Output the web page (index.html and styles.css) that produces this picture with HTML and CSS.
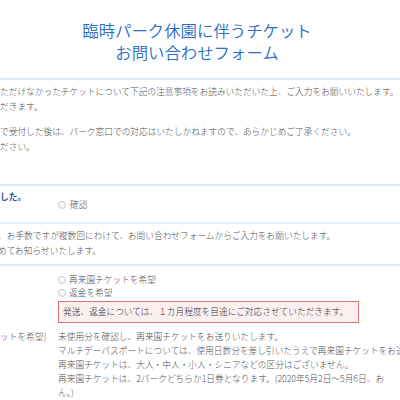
FILE: index.html
```html
<!DOCTYPE html>
<html lang="ja">
<head>
<meta charset="utf-8">
<title>臨時パーク休園に伴うチケットお問い合わせフォーム</title>
<link rel="stylesheet" href="styles.css">
</head>
<body>
<div class="page">
  <header class="head">
    <h1 class="title">臨時パーク休園に伴うチケット<br>お問い合わせフォーム</h1>
  </header>

  <section class="intro">
    <p>ただけなかったチケットについて下記の注意事項をお読みいただいた上、ご入力をお願いいたします。<br>だきます。</p>
    <p>で受付した後は、パーク窓口での対応はいたしかねますので、あらかじめご了承ください。<br>ださい。</p>
  </section>

  <div class="row row-confirm">
    <div class="label label-strong">した。</div>
    <div class="value value-confirm">
      <label class="radio"><span class="dot"></span>確認</label>
    </div>
  </div>

  <section class="note">
    <p class="cut">、お手数ですが複数回にわけて、お問い合わせフォームからご入力をお願いたします。<br>めてお知らせいたします。</p>
  </section>

  <div class="row row-choice">
    <div class="label"></div>
    <div class="value">
      <label class="radio"><span class="dot"></span>再来園チケットを希望</label>
      <label class="radio"><span class="dot"></span>返金を希望</label>
      <div class="alert">発送、返金については、１カ月程度を目途にご対応させていただきます。</div>
    </div>
  </div>

  <div class="row row-detail">
    <div class="label">ットを希望]</div>
    <div class="value">
      <p>未使用分を確認し、再来園チケットをお送りいたします。<br>マルチデーパスポートについては、使用日数分を差し引いたうえで再来園チケットをお送りいたします。<br>再来園チケットは、大人・中人・小人・シニアなどの区分はございません。<br>再来園チケットは、2パークどちらか1日券となります。(2020年5月2日〜5月6日、お<br>ん。)</p>
    </div>
  </div>
</div>
</body>
</html>
```

FILE: styles.css
```css
html, body {
  margin: 0;
  padding: 0;
  background: #ffffff;
}

body {
  width: 400px;
  height: 400px;
  overflow: hidden;
  font-family: "Noto Sans CJK JP", "Noto Sans", sans-serif;
  font-weight: 300;
  color: #505050;
  font-size: 8.7px;
  line-height: 14.5px;
}

p {
  margin: 0;
}

.page {
  width: 400px;
  white-space: nowrap;
}

.head {
  padding: 19px 6px 15px 0;
  border-bottom: 2px solid #d6ebf7;
  text-align: center;
}

.title {
  margin: 0;
  font-size: 16.4px;
  line-height: 22px;
  font-weight: 350;
  color: #2a6fc4;
}

.intro {
  padding: 5px 0 30px;
  border-bottom: 2px solid #d8ebf7;
  display: flex;
  flex-direction: column;
  gap: 11px;
}

.row {
  display: grid;
  grid-template-columns: 58px 1fr;
}

.row-confirm {
  padding: 4px 0 0;
  height: 32px;
  border-bottom: 2px solid #e4f0f9;
}

.label-strong {
  color: #1f55a5;
  font-weight: 700;
}

.value-confirm {
  padding-top: 8px;
}

.radio {
  display: flex;
  align-items: center;
  gap: 3px;
  line-height: 13px;
}

.value-confirm .radio {
  gap: 4px;
}

.dot {
  width: 6px;
  height: 6px;
  border-radius: 50%;
  border: 1px solid #cccccc;
  background: linear-gradient(#ffffff, #f0f0f0);
  flex: none;
}

.note {
  padding: 5px 0 6px;
  border-bottom: 2px solid #dcedf8;
}

.cut {
  margin-left: -2px;
}

.row-choice {
  padding-top: 7px;
}

.row-choice .value {
  display: flex;
  flex-direction: column;
}

.alert {
  margin-top: 2px;
  width: 301px;
  box-sizing: border-box;
  height: 22px;
  padding: 0 4px;
  line-height: 20px;
  border: 1px solid #d8727b;
  background: #fbeff0;
  color: #333333;
}

.row-detail {
  padding-top: 7px;
  line-height: 14px;
}
```
